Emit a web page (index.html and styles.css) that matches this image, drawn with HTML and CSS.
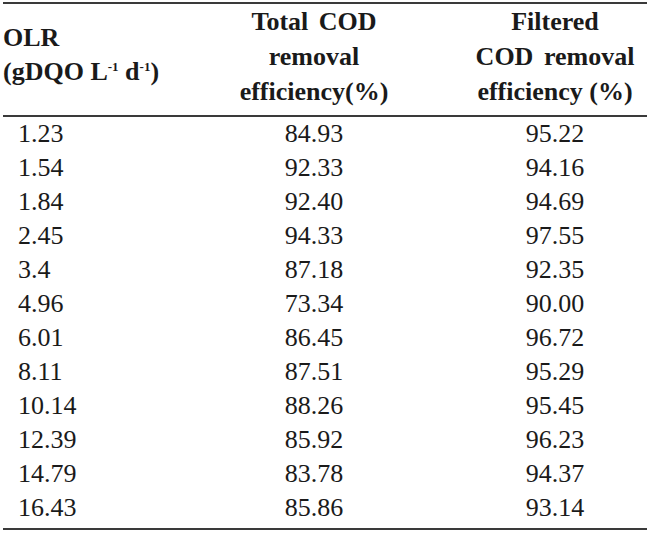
FILE: index.html
```html
<!DOCTYPE html>
<html>
<head>
<meta charset="utf-8">
<link rel="stylesheet" href="styles.css">
</head>
<body>
<table class="data">
  <colgroup>
    <col class="c1">
    <col class="c2">
    <col class="c3">
  </colgroup>
  <thead>
    <tr>
      <th class="olr">OLR<br>(gDQO L<sup>-1</sup> d<sup>-1</sup>)</th>
      <th><span class="wide">Total COD</span><br>removal<br>efficiency(%)</th>
      <th>Filtered<br><span class="wide">COD removal</span><br>efficiency (%)</th>
    </tr>
  </thead>
  <tbody>
    <tr><td>1.23</td><td>84.93</td><td>95.22</td></tr>
    <tr><td>1.54</td><td>92.33</td><td>94.16</td></tr>
    <tr><td>1.84</td><td>92.40</td><td>94.69</td></tr>
    <tr><td>2.45</td><td>94.33</td><td>97.55</td></tr>
    <tr><td>3.4</td><td>87.18</td><td>92.35</td></tr>
    <tr><td>4.96</td><td>73.34</td><td>90.00</td></tr>
    <tr><td>6.01</td><td>86.45</td><td>96.72</td></tr>
    <tr><td>8.11</td><td>87.51</td><td>95.29</td></tr>
    <tr><td>10.14</td><td>88.26</td><td>95.45</td></tr>
    <tr><td>12.39</td><td>85.92</td><td>96.23</td></tr>
    <tr><td>14.79</td><td>83.78</td><td>94.37</td></tr>
    <tr class="last"><td>16.43</td><td>85.86</td><td>93.14</td></tr>
  </tbody>
</table>
</body>
</html>
```
FILE: styles.css
```css
html, body {
  margin: 0;
  padding: 0;
  background: #ffffff;
}
body {
  padding: 2px 3px 0 3px;
  font-family: "Liberation Serif", "Times New Roman", serif;
  color: #1a1a1a;
}
.data {
  width: 644px;
  border-collapse: collapse;
  table-layout: fixed;
}
.c1 { width: 162px; }
.c2 { width: 298px; }
.c3 { width: 184px; }
.data thead tr {
  border-top: 2px solid #3a3a3a;
  border-bottom: 2px solid #3a3a3a;
}
.data th {
  font-weight: bold;
  font-size: 26px;
  line-height: 35px;
  height: 105px;
  padding: 0 0 6px 0;
  text-align: center;
  vertical-align: top;
}
.data th .wide {
  word-spacing: 4px;
}
.data th.olr {
  text-align: left;
  line-height: 34px;
  padding-top: 17px;
  height: auto;
}
.data sup {
  font-size: 13px;
  line-height: 0;
  vertical-align: 9px;
}
.data tbody tr.last {
  border-bottom: 2px solid #3a3a3a;
}
.data td {
  font-size: 26px;
  height: 34px;
  padding: 0;
  text-align: center;
  vertical-align: top;
  line-height: 34px;
}
.data tr.last td {
  padding-bottom: 3px;
}
.data td:first-child {
  text-align: left;
  padding-left: 15px;
}
```
